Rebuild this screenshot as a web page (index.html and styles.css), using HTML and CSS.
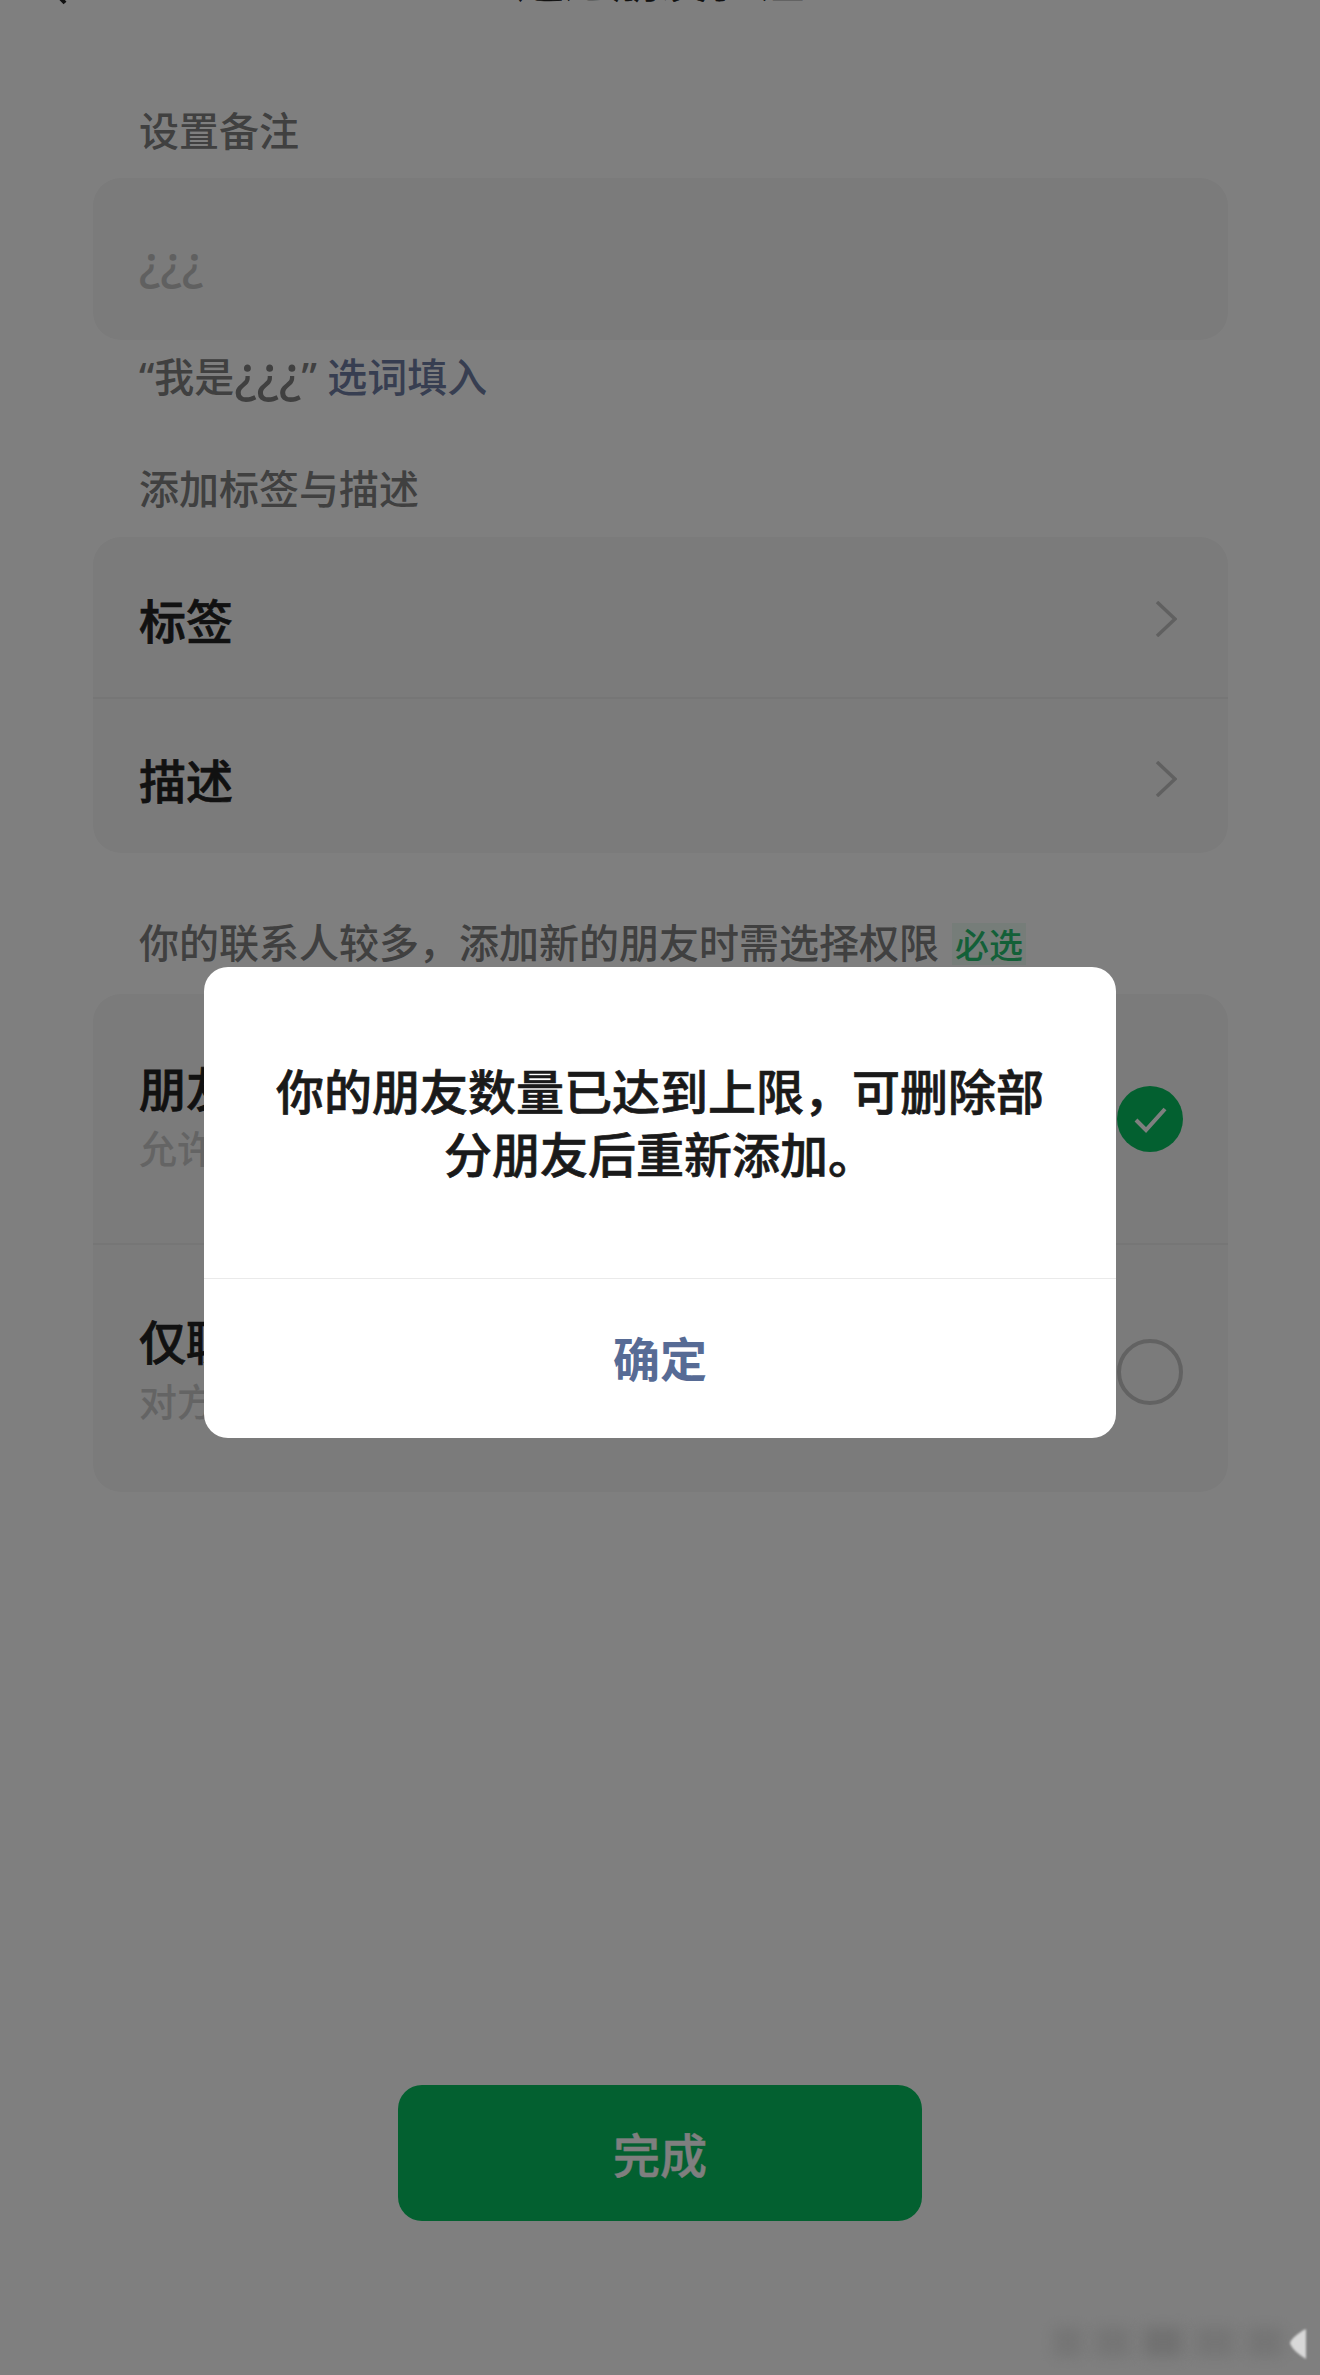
FILE: index.html
```html
<!DOCTYPE html>
<html lang="zh-CN">
<head>
<meta charset="utf-8">
<title>通过朋友验证</title>
<link rel="stylesheet" href="styles.css">
</head>
<body>
<div class="page">
  <header class="nav">
    <svg class="back" width="24" height="40" viewBox="0 0 24 40"><polyline points="20,2 3,20 20,38"/></svg>
    <h1 class="nav-title">通过朋友验证</h1>
  </header>

  <p class="label label-first">设置备注</p>
  <div class="card card-input"><span class="input-value">¿¿¿</span></div>
  <p class="hint">“我是<span class="hint-name">¿¿¿</span>” <a class="link">选词填入</a></p>

  <p class="label label-second">添加标签与描述</p>
  <div class="card card-second">
    <div class="row row-tag">
      <span class="row-title">标签</span>
      <svg class="chevron" width="22" height="36" viewBox="0 0 22 36"><polyline points="2,1 20,18 2,35"/></svg>
    </div>
    <div class="row row-desc">
      <span class="row-title">描述</span>
      <svg class="chevron" width="22" height="36" viewBox="0 0 22 36"><polyline points="2,1 20,18 2,35"/></svg>
    </div>
  </div>

  <p class="label label-third">你的联系人较多，添加新的朋友时需选择权限 <span class="required">必选</span></p>
  <div class="card card-third">
    <div class="row row-perm row-perm-a">
      <div class="perm-text">
        <span class="row-title">朋友</span>
        <span class="perm-sub">允许</span>
      </div>
      <svg class="radio" width="66" height="66" viewBox="0 0 66 66"><circle class="radio-on" cx="33" cy="33" r="33"/><polyline class="radio-tick" points="19,34 29,44 48,23"/></svg>
    </div>
    <div class="row row-perm row-perm-b">
      <div class="perm-text">
        <span class="row-title">仅聊天</span>
        <span class="perm-sub">对方不可查看朋友圈</span>
      </div>
      <svg class="radio" width="66" height="66" viewBox="0 0 66 66"><circle class="radio-off" cx="33" cy="33" r="31"/></svg>
    </div>
  </div>

  <button class="done">完成</button>
</div>

<div class="scrim">
  <div class="dialog">
    <div class="dialog-body">你的朋友数量已达到上限，可删除部分朋友后重新添加。</div>
    <div class="dialog-action">确定</div>
  </div>
</div>

<div class="mark" aria-hidden="true">
  <span class="smudge s1"></span><span class="smudge s2"></span><span class="smudge s3"></span><span class="smudge s4"></span><span class="smudge s5"></span>
  <svg class="glint" width="18" height="32" viewBox="0 0 18 32"><path d="M17 1 C10 4 2 11 1 15 C2 20 10 27 17 31 Z"/></svg>
</div>
</body>
</html>
```
FILE: styles.css
```css
* { box-sizing: border-box; }
html, body { margin: 0; padding: 0; }
body {
  width: 1320px;
  height: 2375px;
  overflow: hidden;
  position: relative;
  background: #fff;
  font-family: "Noto Sans CJK SC", "Noto Sans", sans-serif;
}
.page { display: flex; flex-direction: column; align-items: stretch; height: 2375px; }

.nav { position: relative; height: 60px; margin-top: -54px; display: flex; justify-content: center; flex: none; }
.back { position: absolute; left: 45px; top: 19px; fill: none; stroke: #222; stroke-width: 4; }
.nav-title { margin: 0; font-size: 48px; line-height: 60px; font-weight: 500; -webkit-text-stroke: .6px #222; color: #222; }

.label { margin: 0 0 0 139px; font-size: 40px; line-height: 50px; font-weight: 500; color: #808080; white-space: nowrap; }
.label-first { margin-top: 98px; }
.label-second { margin-top: 60px; }
.label-third { margin-top: 63px; }

.card { margin: 24px 92px 0 93px; border-radius: 28px; background: #f6f6f6; flex: none; }
.card-second { margin-top: 25px; }
.card-third { margin-top: 28px; }
.card-input { height: 162px; display: flex; align-items: center; padding: 5px 0 0 46px; }
.input-value { font-family: "Noto Sans", sans-serif; font-size: 48px; line-height: 50px; font-weight: 500; color: #c0c0c0; }

.hint { height: 50px; margin: 12px 0 0 139px; font-family: "Noto Sans", "Noto Sans CJK SC", sans-serif; font-size: 40px; line-height: 50px; font-weight: 500; color: #808080; white-space: nowrap; }
.hint-name { font-size: 50px; font-weight: 500; line-height: 40px; }
.link { color: #6f7da3; }

.row { display: flex; align-items: center; justify-content: space-between; padding: 0 51px 0 46px; }
.row-tag { height: 162px; padding-top: 4px; border-bottom: 2px solid #ececec; }
.row-desc { height: 154px; padding-top: 6px; }
.row-title { font-size: 47px; line-height: 58px; font-weight: 500; -webkit-text-stroke: .7px #222; color: #222; white-space: nowrap; }
.chevron { fill: none; stroke: #c0c0c0; stroke-width: 3.5; }

.required { display: inline-block; margin-left: 4px; padding: 0 3px; font-size: 34px; line-height: 42px; color: #26c070; background: rgba(7,193,96,.08); vertical-align: 0; }

.row-perm { padding-right: 45px; }
.row-perm-a { height: 251px; border-bottom: 2px solid #ececec; }
.row-perm-b { height: 247px; padding-top: 6px; }
.perm-text { display: flex; flex-direction: column; padding-bottom: 8px; }
.perm-sub { margin-top: 6px; font-size: 38px; line-height: 50px; font-weight: 500; color: #c8c8c8; white-space: nowrap; }
.radio { flex: none; }
.radio-on { fill: #07c160; }
.radio-tick { fill: none; stroke: #fff; stroke-width: 4; }
.radio-off { fill: none; stroke: #c4c4c4; stroke-width: 4; }

.done { display: block; align-self: center; width: 524px; height: 136px; margin-top: 593px; border: 0; border-radius: 24px; background: #07c160; color: #fff; font: 500 47px/58px "Noto Sans CJK SC", "Noto Sans", sans-serif; -webkit-text-stroke: .5px #fff; flex: none; }

.scrim { position: absolute; inset: 0; background: rgba(0,0,0,.5); display: flex; justify-content: center; align-items: flex-start; padding-top: 967px; }
.dialog { width: 912px; height: 471px; background: #fff; border-radius: 24px; display: flex; flex-direction: column; overflow: hidden; }
.dialog-body { height: 312px; flex: none; display: flex; align-items: center; padding: 0 70px 4px; border-bottom: 1px solid #eaeaea; text-align: center; font-size: 48px; line-height: 63px; font-weight: 500; -webkit-text-stroke: .7px #1a1a1a; color: #1a1a1a; }
.dialog-action { flex: 1; display: flex; align-items: center; justify-content: center; padding-bottom: 5px; font-size: 47px; font-weight: 700; color: #576b95; }

.mark { position: absolute; right: 13px; bottom: 13px; width: 254px; height: 40px; display: flex; align-items: center; gap: 12px; }
.smudge { display: block; height: 30px; background: #6e6e6e; opacity: .55; filter: blur(7px); flex: none; }
.s1 { width: 30px; }
.s2 { width: 36px; }
.s3 { width: 40px; opacity: .8; }
.s4 { width: 40px; }
.s5 { width: 36px; margin-right: -4px; }
.glint { position: absolute; right: 0; top: 6px; fill: #d8d8d8; filter: blur(1px); }
```
